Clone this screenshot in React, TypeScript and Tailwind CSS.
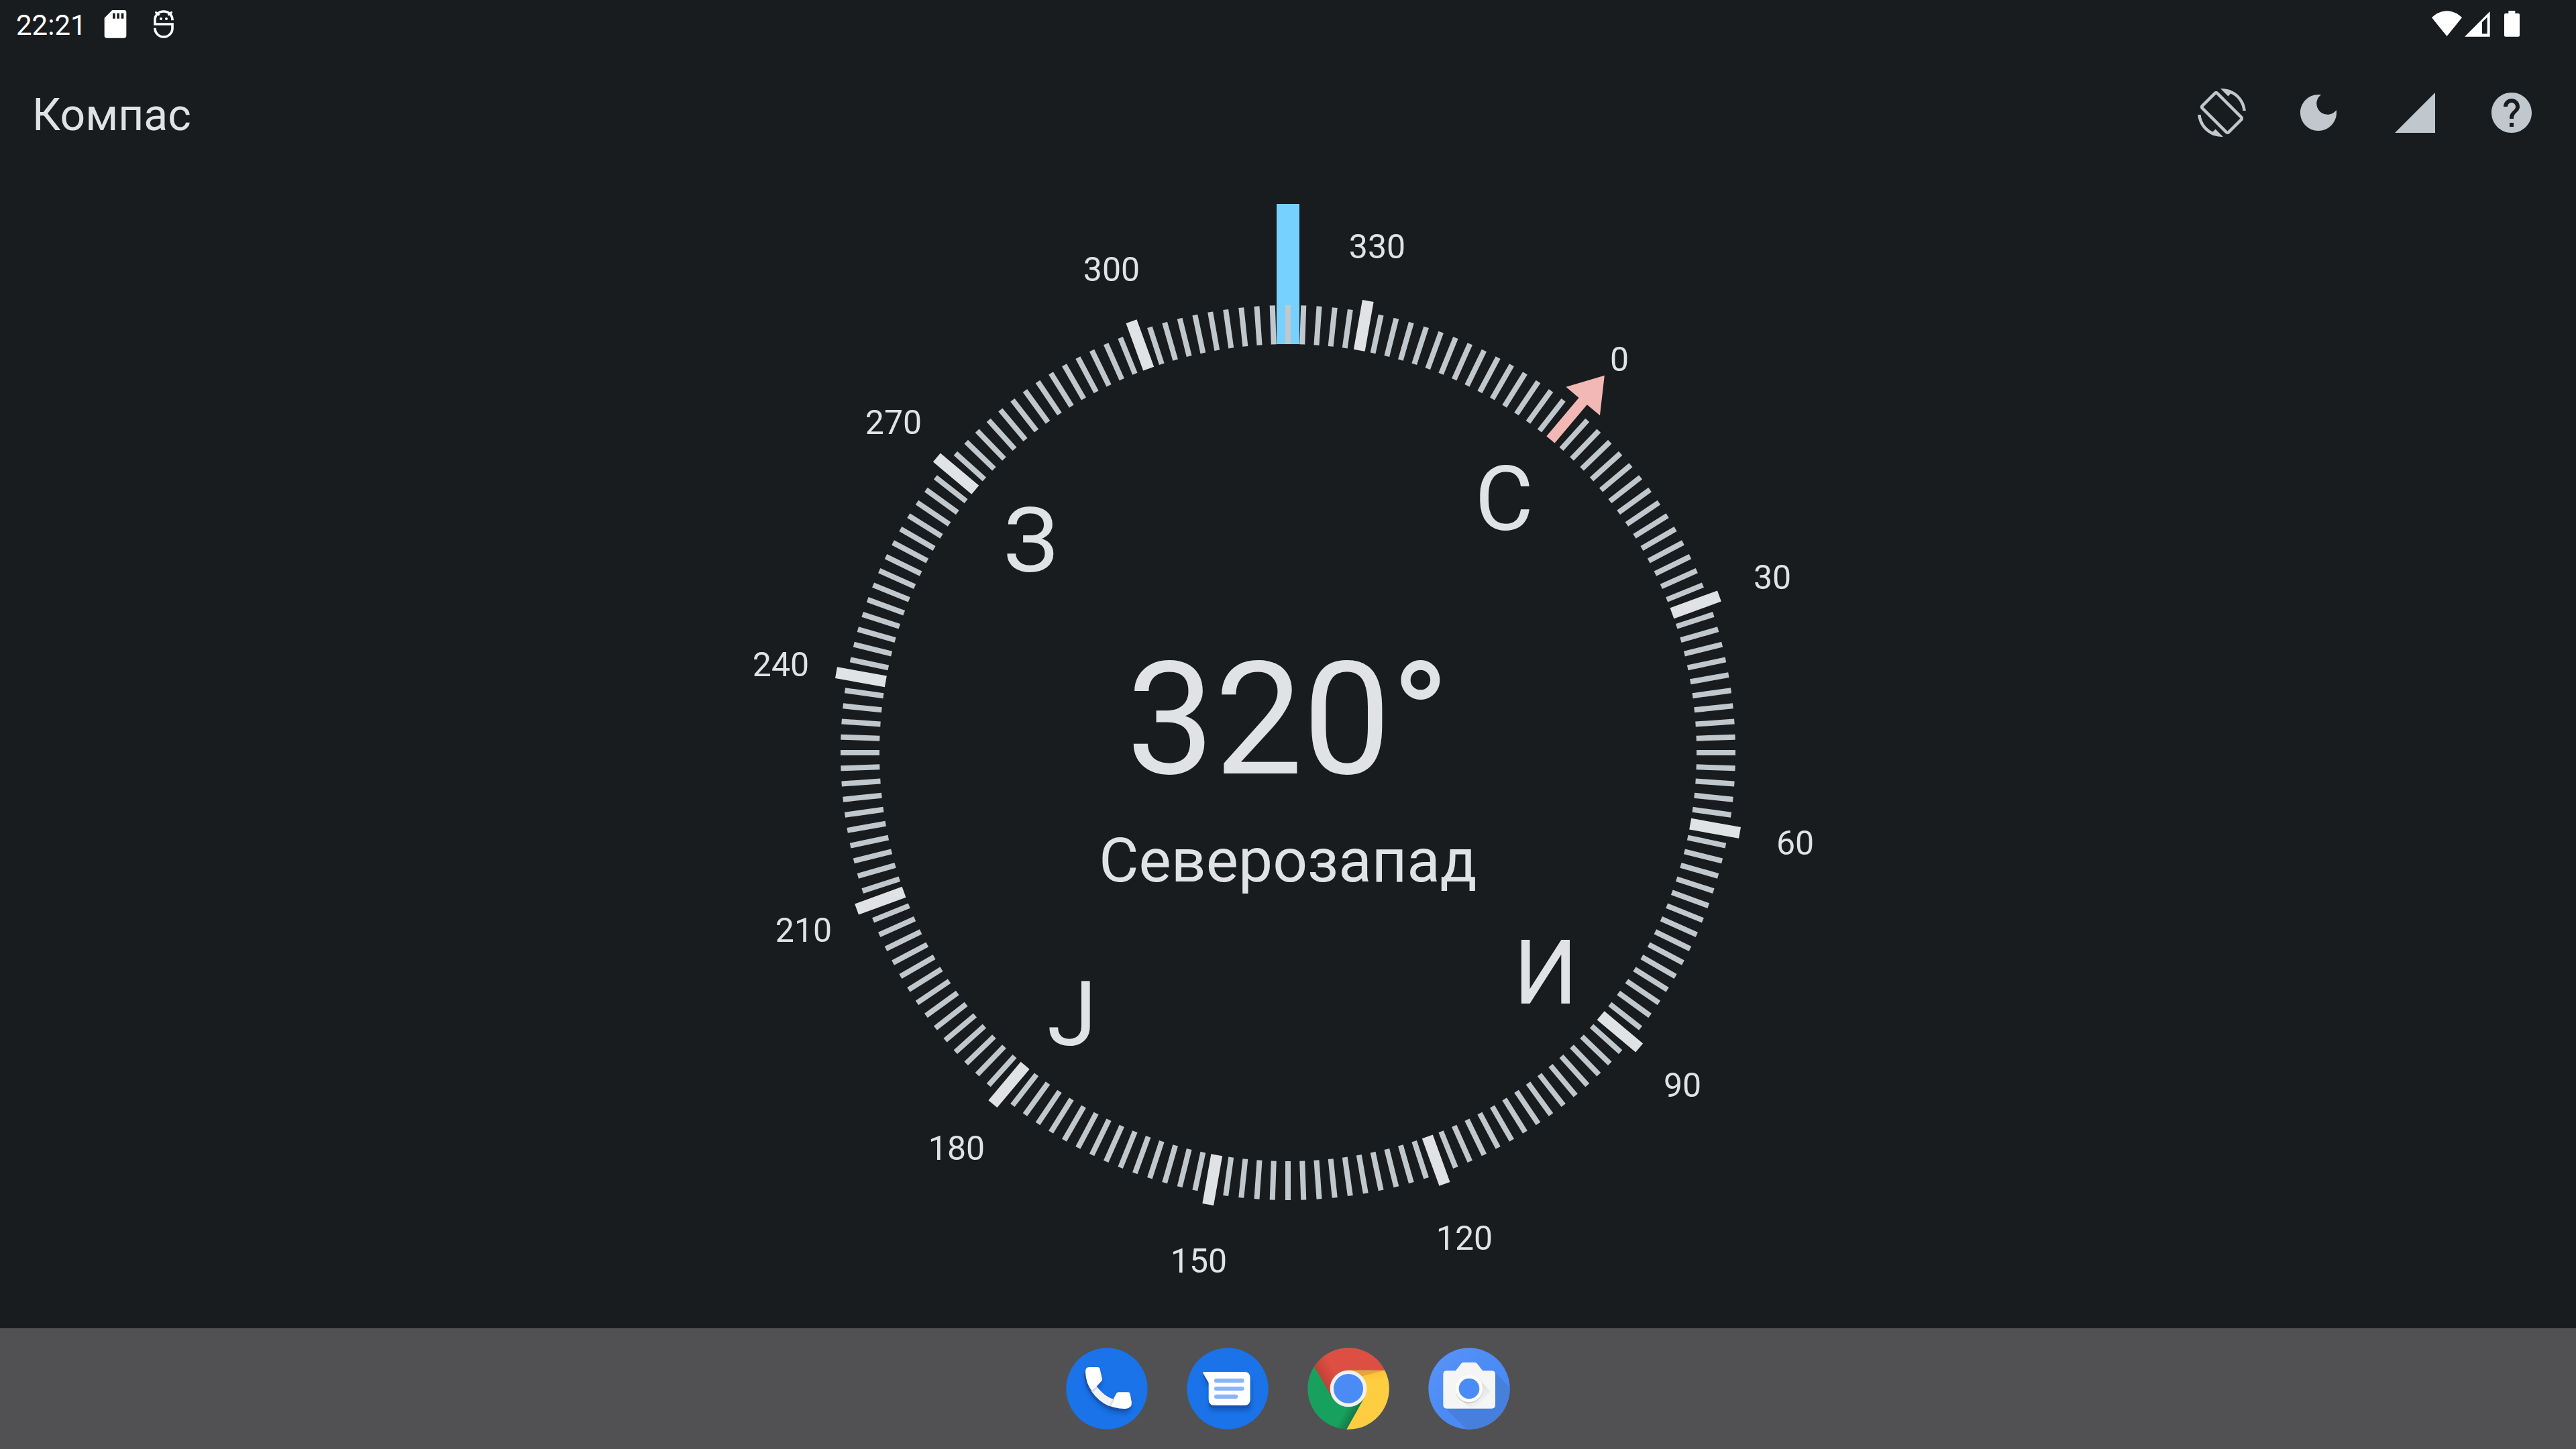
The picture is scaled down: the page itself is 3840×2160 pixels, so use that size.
import type { ReactNode } from "react";

const HEADING = 320;
const CENTER = 818;
const LABEL_RADIUS = 768;
const CARDINAL_RADIUS = 501;

const cardinals = [
  { letter: "С", bearing: 0 },
  { letter: "И", bearing: 90 },
  { letter: "Ј", bearing: 180 },
  { letter: "З", bearing: 270 },
];

function polar(bearing: number, radius: number) {
  const angle = ((bearing - HEADING) * Math.PI) / 180;
  return {
    x: Math.round(CENTER + radius * Math.sin(angle)),
    y: Math.round(CENTER - radius * Math.cos(angle)),
  };
}

function Dial() {
  const minor = Array.from({ length: 180 }, (_, i) => i * 2).filter((b) => b % 30 !== 0);
  const major = Array.from({ length: 12 }, (_, i) => i * 30);
  return (
    <svg viewBox="0 0 1636 1636" className="h-full min-h-0 w-full fill-[#e1e2e5]" role="img" aria-label="Компас 320°">
      <rect x="801" y="0" width="34" height="209" fill="#76d1ff" />
      {minor.map((b) => (
        <rect
          key={b}
          x="814"
          y="151"
          width="8"
          height="58"
          fill="#c0c7cd"
          transform={`rotate(${b - HEADING} ${CENTER} ${CENTER})`}
        />
      ))}
      {major.slice(1).map((b) => (
        <rect
          key={b}
          x="810"
          y="134"
          width="17"
          height="75"
          transform={`rotate(${b - HEADING} ${CENTER} ${CENTER})`}
        />
      ))}
      <path
        d="M810 209V134H785L818 84L851 134H826V209Z"
        fill="#f2b8b5"
        transform={`rotate(${-HEADING} ${CENTER} ${CENTER})`}
      />
      {major.map((b) => {
        const p = polar(b, LABEL_RADIUS);
        return (
          <text key={b} x={p.x} y={p.y + 19} textAnchor="middle" className="text-[50px]">
            {b}
          </text>
        );
      })}
      {cardinals.map(({ letter, bearing }) => {
        const p = polar(bearing, CARDINAL_RADIUS);
        return (
          <text key={letter} x={p.x} y={p.y + 52} textAnchor="middle" className="text-[134px]">
            {letter}
          </text>
        );
      })}
      <text x={CENTER} y="849" textAnchor="middle" className="text-[234px]">
        320°
      </text>
      <text x={CENTER} y="1010" textAnchor="middle" className="text-[91px]">
        Северозапад
      </text>
    </svg>
  );
}

function StatusBar() {
  return (
    <div className="flex h-[72px] items-center justify-between pr-[84px] pl-6 text-white">
      <div className="flex items-center">
        <time className="pt-1 text-[42px] leading-none">22:21</time>
        <div className="ml-[22px] flex gap-[30px]">
          <svg viewBox="33 45 126 126" className="size-[42px]" fill="currentColor" aria-hidden="true">
            <path
              fillRule="evenodd"
              d="M82 45h53a10 10 0 0 1 10 10v105a10 10 0 0 1-10 10H57a10 10 0 0 1-10-10V80zM84 59v24h11V59zM103 59v24h11V59zM122 59v24h11V59z"
            />
          </svg>
          <svg viewBox="249 45 126 126" className="size-[42px]" fill="none" stroke="currentColor" aria-hidden="true">
            <path
              strokeWidth="11"
              d="M351 91V88A39 37 0 0 0 312 51A39 37 0 0 0 273 88V108H351V127A39 38 0 0 1 312 165A39 38 0 0 1 273 127V125"
            />
            <path strokeWidth="10" strokeLinecap="round" d="M278 56L289 65M346 56L335 65" />
            <circle cx="300" cy="84" r="6" fill="currentColor" stroke="none" />
            <circle cx="324" cy="84" r="6" fill="currentColor" stroke="none" />
          </svg>
        </div>
      </div>
      <div className="flex items-center">
        <svg viewBox="45 45 135 126" className="h-[42px] w-[45px]" fill="currentColor" aria-hidden="true">
          <path d="M45 79C64 60 88 49 112.500 49S161 60 180 79L112.500 162Z" />
        </svg>
        <svg viewBox="192 45 114 126" className="ml-1 h-[42px] w-[38px]" fill="currentColor" aria-hidden="true">
          <path fillRule="evenodd" d="M192 164L305 51V164ZM270 99V151H293V77Z" />
        </svg>
        <svg viewBox="369 45 69 126" className="ml-[21px] h-[42px] w-[23px]" fill="currentColor" aria-hidden="true">
          <path d="M388 48h30v12h14a6 6 0 0 1 6 6v92a6 6 0 0 1-6 6h-57a6 6 0 0 1-6-6V66a6 6 0 0 1 6-6h13z" />
        </svg>
      </div>
    </div>
  );
}

const actions = [
  {
    label: "Ротација екрана",
    d: "M16.48 2.52c3.27 1.55 5.61 4.72 5.97 8.48h1.5C23.44 4.84 18.29 0 12 0l-.66.03 3.81 3.81 1.33-1.32zm-6.25-.77c-.59-.59-1.54-.59-2.12 0L1.750 8.11c-.59.59-.59 1.54 0 2.12l12.02 12.02c.59.59 1.54.59 2.12 0l6.36-6.36c.59-.59.59-1.54 0-2.12L10.23 1.75zm4.6 19.44L2.81 9.17l6.36-6.36 12.02 12.02-6.36 6.36zm-7.31.29C4.25 19.94 1.91 16.76 1.55 13H.05C.56 19.16 5.71 24 12 24l.66-.03-3.81-3.81-1.33 1.32z",
  },
  {
    label: "Ноћни режим",
    d: "M12 3c-4.97 0-9 4.03-9 9s4.03 9 9 9 9-4.03 9-9c0-.46-.04-.92-.1-1.36-.98 1.37-2.58 2.26-4.4 2.26-2.98 0-5.4-2.42-5.4-5.4 0-1.81.89-3.42 2.26-4.4-.44-.06-.9-.1-1.36-.1z",
  },
  { label: "Јачина сигнала", d: "M2 22h20V2z" },
  {
    label: "Помоћ",
    d: "M12 2C6.48 2 2 6.48 2 12s4.48 10 10 10 10-4.48 10-10S17.52 2 12 2zm1 17h-2v-2h2v2zm2.07-7.75l-.9.92C13.45 12.9 13 13.5 13 15h-2v-.5c0-1.1.45-2.1 1.17-2.83l1.24-1.26c.37-.36.59-.86.59-1.41 0-1.1-.9-2-2-2s-2 .9-2 2H8c0-2.21 1.79-4 4-4s4 1.79 4 4c0 .88-.36 1.68-.93 2.25z",
  },
];

function AppBar() {
  return (
    <header className="flex h-48 items-center justify-between pr-6 pl-12">
      <h1 className="pt-2 text-[66px] leading-none">Компас</h1>
      <div className="flex">
        {actions.map(({ label, d }) => (
          <button key={label} type="button" aria-label={label} className="grid size-36 place-items-center text-[#c0c7cd]">
            <svg viewBox="0 0 24 24" className="size-[72px]" fill="currentColor" aria-hidden="true">
              <path d={d} />
            </svg>
          </button>
        ))}
      </div>
    </header>
  );
}

const handset =
  "M-80 -96H-41Q-33 -96 -31 -87L-21 -43Q-20 -38 -24 -34L-46 -10Q-15 32 28 48L43 21Q46 16 52 16H94Q103 16 104 25L111 62Q112 88 82 90Q-10 92 -68 10Q-94 -24 -96 -74Q-96 -96 -80 -96Z";
const bubble =
  "M-106 -75H74Q101 -75 101 -48V48Q101 75 74 75H-58Q-85 75 -85 48V-26L-110 -69Q-112 -75 -106 -75Z";

function PhoneIcon() {
  return (
    <>
      <circle r="182" fill="#1a73e8" />
      <path d={handset} fill="#0b3f91" opacity="0.45" transform="translate(-2 22)" filter="url(#soft)" />
      <path d={handset} fill="#1853ad" transform="translate(-6 12)" />
      <path d={handset} fill="#fff" />
      <path d="M-70 10L-46 -10Q-15 32 28 48L8 77Q-38 58 -70 10Z" fill="#f1f2f4" />
      <path d="M-70 10L-46 -10L-41 -4L-64 18ZM28 48L8 77L16 79L34 48Z" fill="#d9dadf" />
    </>
  );
}

function MessagesIcon() {
  return (
    <>
      <circle r="182" fill="#1a73e8" />
      <path d={bubble} fill="#0b3f91" opacity="0.5" transform="translate(4 24)" filter="url(#soft)" />
      <path d={bubble} fill="#1853ad" transform="translate(0 12)" />
      <path d={bubble} fill="#fff" />
      <g fill="#8ab4f8">
        <rect x="-60" y="-45" width="134" height="19" rx="9" />
        <rect x="-60" y="-9" width="134" height="18" rx="9" />
        <rect x="-60" y="26" width="106" height="19" rx="9" />
      </g>
    </>
  );
}

function ChromeIcon() {
  return (
    <>
      <linearGradient id="red" gradientUnits="userSpaceOnUse" x1="-112" y1="-28" x2="-55" y2="-61">
        <stop offset="0" stopColor="#bf4135" />
        <stop offset="1" stopColor="#dd4f43" />
      </linearGradient>
      <linearGradient id="yellow" gradientUnits="userSpaceOnUse" x1="0" y1="-82" x2="10" y2="-20">
        <stop offset="0" stopColor="#fab932" />
        <stop offset="1" stopColor="#ffcd42" />
      </linearGradient>
      <linearGradient id="green" gradientUnits="userSpaceOnUse" x1="32" y1="112" x2="-10" y2="88">
        <stop offset="0" stopColor="#127a45" />
        <stop offset="1" stopColor="#18a05e" />
      </linearGradient>
      <circle r="182" fill="url(#green)" />
      <path d="M-153 -98A182 182 0 0 1 163 -82H0V0L-71 41Z" fill="url(#red)" />
      <path d="M163 -82A182 182 0 0 1 -8 182L71 41L0 0V-82Z" fill="url(#yellow)" />
      <path d="M0 -82H160L62 -56Z" fill="#e0a83c" />
      <circle r="82" fill="#f1f1f1" />
      <circle r="66" fill="#4b8bf5" />
    </>
  );
}

function CameraIcon() {
  return (
    <>
      <clipPath id="lens">
        <circle r="182" />
      </clipPath>
      <linearGradient id="cast" gradientUnits="userSpaceOnUse" x1="30" y1="-30" x2="80" y2="55">
        <stop offset="0" stopColor="#cccccc" />
        <stop offset="1" stopColor="#f3f3f3" />
      </linearGradient>
      <linearGradient id="sky" x1="0" y1="0" x2="1" y2="1">
        <stop offset="0" stopColor="#5b94f7" />
        <stop offset="0.5" stopColor="#4b8bf5" />
      </linearGradient>
      <circle r="182" fill="url(#sky)" />
      <path d="M112 -76L300 112V300H106L-110 84Z" fill="#4780dc" clipPath="url(#lens)" />
      <path
        d="M-60 -80L-36 -112Q-32 -117 -26 -117H26Q32 -117 36 -112L60 -80H101Q117 -80 117 -64V73Q117 89 101 89H-100Q-116 89 -116 73V-64Q-116 -80 -100 -80Z"
        fill="#f5f5f5"
      />
      <path d="M46 -38L96 12L30 86L0 84L-42 42Z" fill="url(#cast)" opacity="0.7" />
      <circle r="60" cy="6" fill="#000" opacity="0.12" />
      <circle r="60" fill="#fff" />
      <circle r="46" fill="#4b8bf5" />
    </>
  );
}

const apps: { label: string; icon: ReactNode }[] = [
  { label: "Телефон", icon: <PhoneIcon /> },
  { label: "Поруке", icon: <MessagesIcon /> },
  { label: "Chrome", icon: <ChromeIcon /> },
  { label: "Камера", icon: <CameraIcon /> },
];

function Dock() {
  return (
    <nav className="flex h-[180px] shrink-0 items-center justify-center gap-[58px] bg-[#515153]">
      {apps.map(({ label, icon }) => (
        <button key={label} type="button" aria-label={label} className="size-[122px] rounded-full">
          <svg viewBox="-183 -183 366 366" className="size-full" aria-hidden="true">
            <filter id="soft" x="-30%" y="-30%" width="160%" height="160%">
              <feGaussianBlur stdDeviation="10" />
            </filter>
            {icon}
          </svg>
        </button>
      ))}
    </nav>
  );
}

export default function App() {
  return (
    <div className="flex h-screen flex-col bg-[#191c1e] font-['Roboto',sans-serif] text-[#e1e2e5]">
      <StatusBar />
      <AppBar />
      <main className="flex min-h-0 flex-1 p-10">
        <Dial />
      </main>
      <Dock />
    </div>
  );
}
